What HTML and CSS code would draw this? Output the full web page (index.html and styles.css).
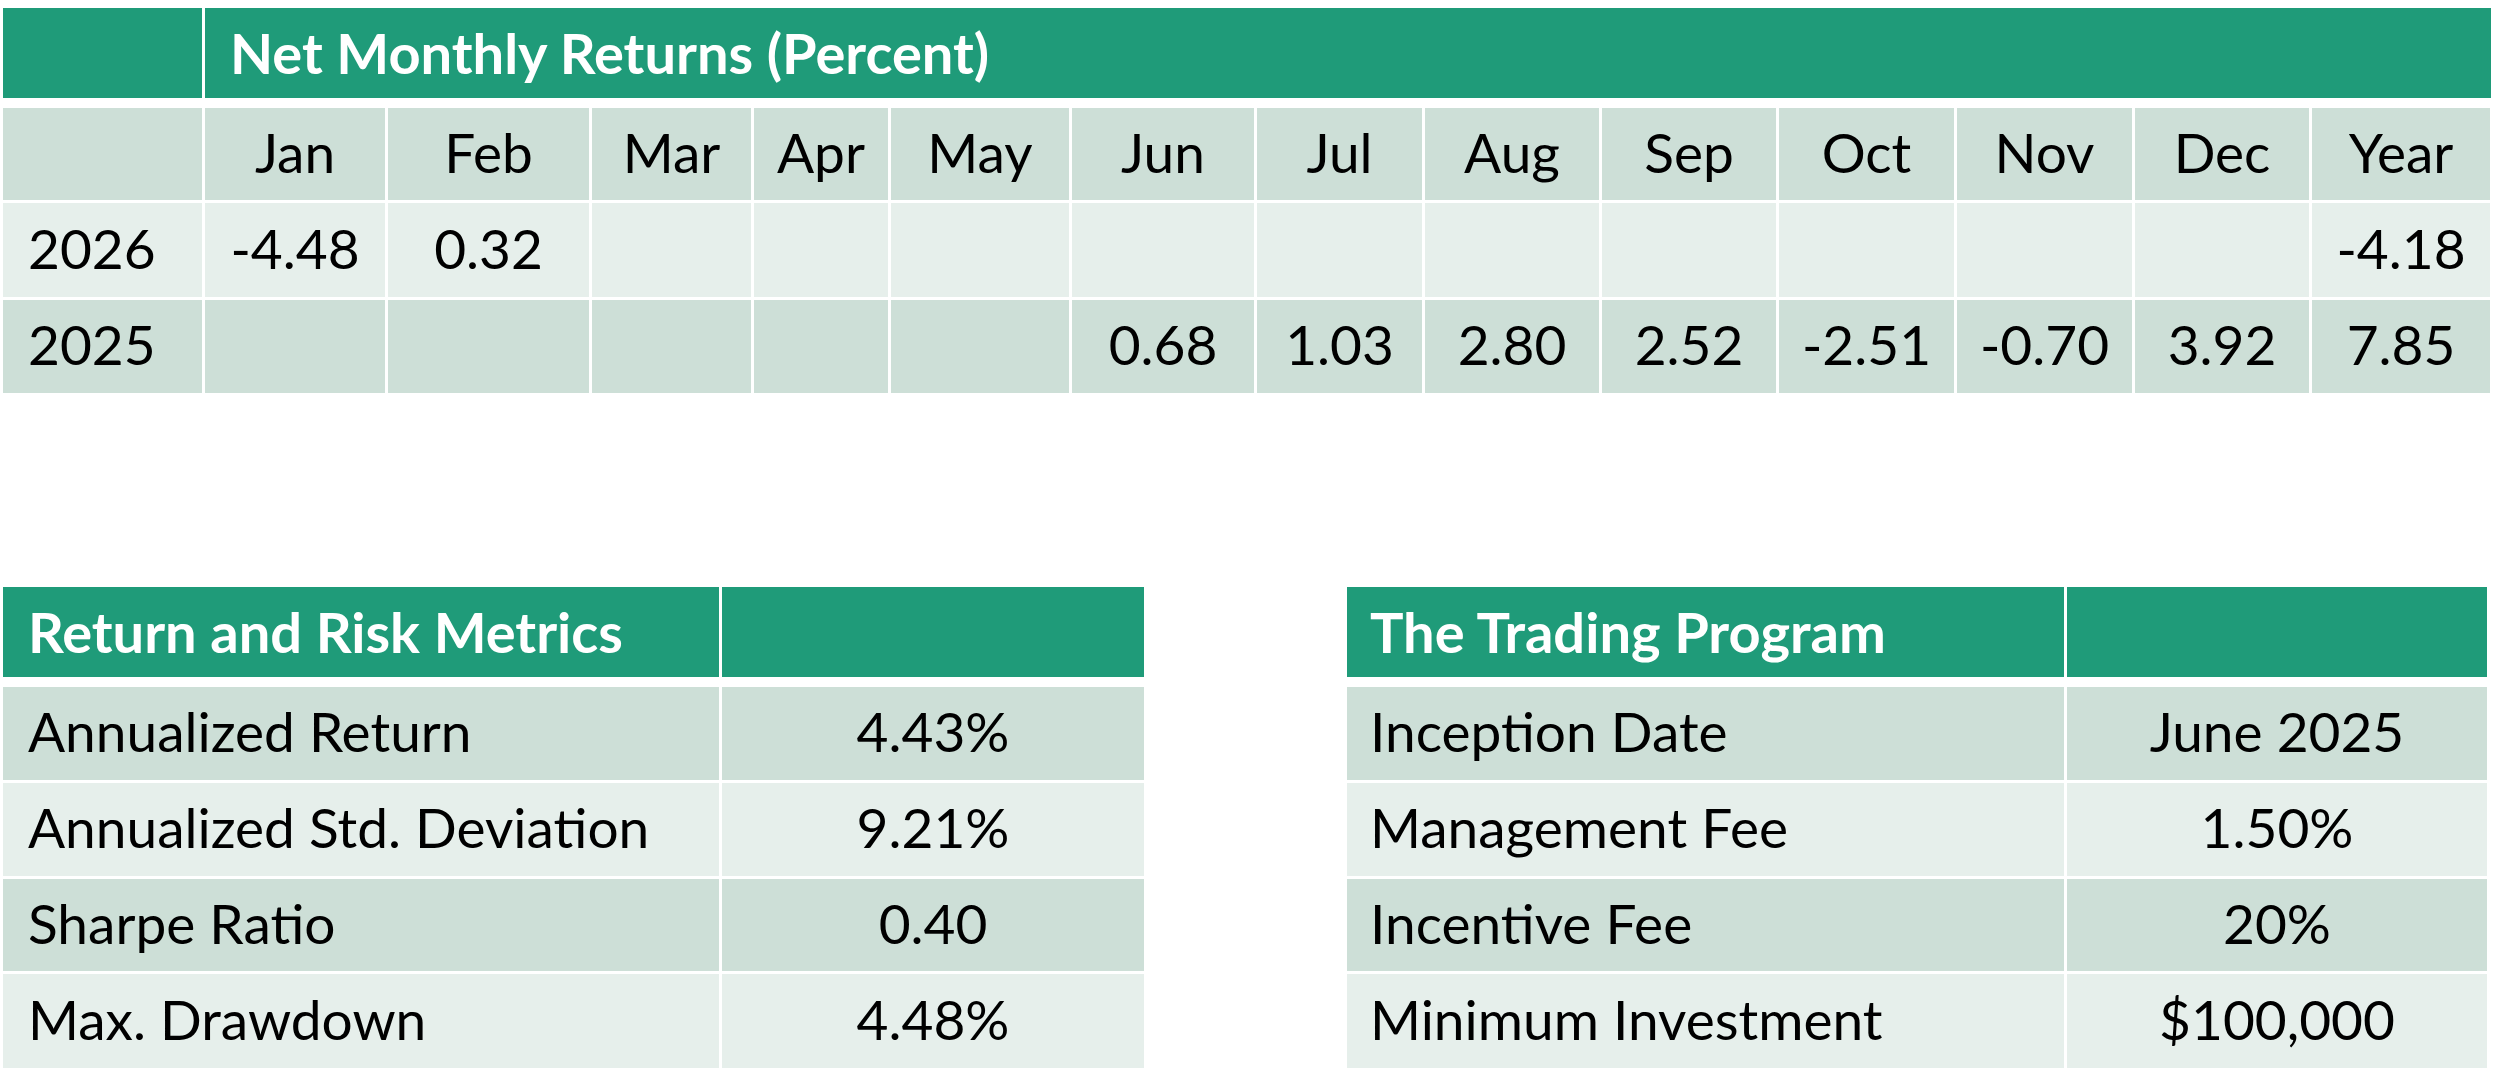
FILE: index.html
```html
<!DOCTYPE html>
<html lang="en">
<head>
<meta charset="utf-8">
<title>Net Monthly Returns</title>
<link rel="stylesheet" href="styles.css">
</head>
<body>
<div class="page">
  <section class="returns">
    <div class="returns-head">
      <div class="cell head"></div>
      <div class="cell head title">Net Monthly Returns (Percent)</div>
    </div>
    <div class="returns-body">
      <div class="cell dark"></div>
      <div class="cell dark c">Jan</div>
      <div class="cell dark c">Feb</div>
      <div class="cell dark c">Mar</div>
      <div class="cell dark c">Apr</div>
      <div class="cell dark c">May</div>
      <div class="cell dark c">Jun</div>
      <div class="cell dark c">Jul</div>
      <div class="cell dark c">Aug</div>
      <div class="cell dark c">Sep</div>
      <div class="cell dark c">Oct</div>
      <div class="cell dark c">Nov</div>
      <div class="cell dark c">Dec</div>
      <div class="cell dark c">Year</div>

      <div class="cell light label">2026</div>
      <div class="cell light c">-4.48</div>
      <div class="cell light c">0.32</div>
      <div class="cell light c"></div>
      <div class="cell light c"></div>
      <div class="cell light c"></div>
      <div class="cell light c"></div>
      <div class="cell light c"></div>
      <div class="cell light c"></div>
      <div class="cell light c"></div>
      <div class="cell light c"></div>
      <div class="cell light c"></div>
      <div class="cell light c"></div>
      <div class="cell light c">-4.18</div>

      <div class="cell dark label">2025</div>
      <div class="cell dark c"></div>
      <div class="cell dark c"></div>
      <div class="cell dark c"></div>
      <div class="cell dark c"></div>
      <div class="cell dark c"></div>
      <div class="cell dark c">0.68</div>
      <div class="cell dark c">1.03</div>
      <div class="cell dark c">2.80</div>
      <div class="cell dark c">2.52</div>
      <div class="cell dark c">-2.51</div>
      <div class="cell dark c">-0.70</div>
      <div class="cell dark c">3.92</div>
      <div class="cell dark c">7.85</div>
    </div>
  </section>

  <div class="lower">
    <section class="info metrics">
      <div class="info-head">
        <div class="cell head title">Return and Risk Metrics</div>
        <div class="cell head"></div>
      </div>
      <div class="info-body">
        <div class="cell dark label">Annualized Return</div>
        <div class="cell dark c">4.43%</div>
        <div class="cell light label">Annualized Std. Deviation</div>
        <div class="cell light c">9.21%</div>
        <div class="cell dark label">Sharpe Ratio</div>
        <div class="cell dark c">0.40</div>
        <div class="cell light label">Max. Drawdown</div>
        <div class="cell light c">4.48%</div>
      </div>
    </section>

    <section class="info program">
      <div class="info-head">
        <div class="cell head title">The Trading Program</div>
        <div class="cell head"></div>
      </div>
      <div class="info-body">
        <div class="cell dark label">Inception Date</div>
        <div class="cell dark c">June 2025</div>
        <div class="cell light label">Management Fee</div>
        <div class="cell light c">1.50%</div>
        <div class="cell dark label">Incentive Fee</div>
        <div class="cell dark c">20%</div>
        <div class="cell light label">Minimum Investment</div>
        <div class="cell light c">$100,000</div>
      </div>
    </section>
  </div>
</div>
</body>
</html>
```

FILE: styles.css
```css
html, body {
  margin: 0;
  padding: 0;
  background: #ffffff;
}

.page {
  padding: 8px 0 0 3px;
  font-family: "Lato", "Liberation Sans", sans-serif;
  font-size: 55px;
  color: #000000;
}

.cell {
  display: flex;
  align-items: center;
  line-height: 1.2;
  white-space: nowrap;
}

.dark,
.light {
  padding-bottom: 5px;
  box-sizing: border-box;
}

.head {
  background: #1f9b79;
  color: #ffffff;
  font-weight: 700;
  font-size: 56px;
}

.title {
  padding-left: 25px;
}

.dark {
  background: #cddfd7;
}

.light {
  background: #e6efeb;
}

.c {
  justify-content: center;
}

.label {
  padding-left: 25px;
}

/* Top table */
.returns {
  width: 2488px;
}

.returns-head {
  display: grid;
  grid-template-columns: 199px 1fr;
  grid-template-rows: 90px;
  column-gap: 3px;
}

.returns-body {
  margin-top: 10px;
  display: grid;
  grid-template-columns: 199px 180px 201px 159px 134px 178px 182px 165px 174px 174px 175px 175px 174px 178px;
  grid-template-rows: 92px 94px 93px;
  gap: 3px;
}

/* Lower tables */
.lower {
  display: flex;
  gap: 203px;
  margin-top: 194px;
}

.info-head {
  display: grid;
  grid-template-rows: 90px;
  column-gap: 3px;
}

.info-body {
  margin-top: 10px;
  display: grid;
  grid-template-rows: 93px 93px 92px 94px;
  gap: 3px;
}

.metrics .info-head,
.metrics .info-body {
  grid-template-columns: 716px 422px;
}

.program .info-head,
.program .info-body {
  grid-template-columns: 717px 420px;
}

.program .title,
.program .label {
  padding-left: 23px;
}
```
